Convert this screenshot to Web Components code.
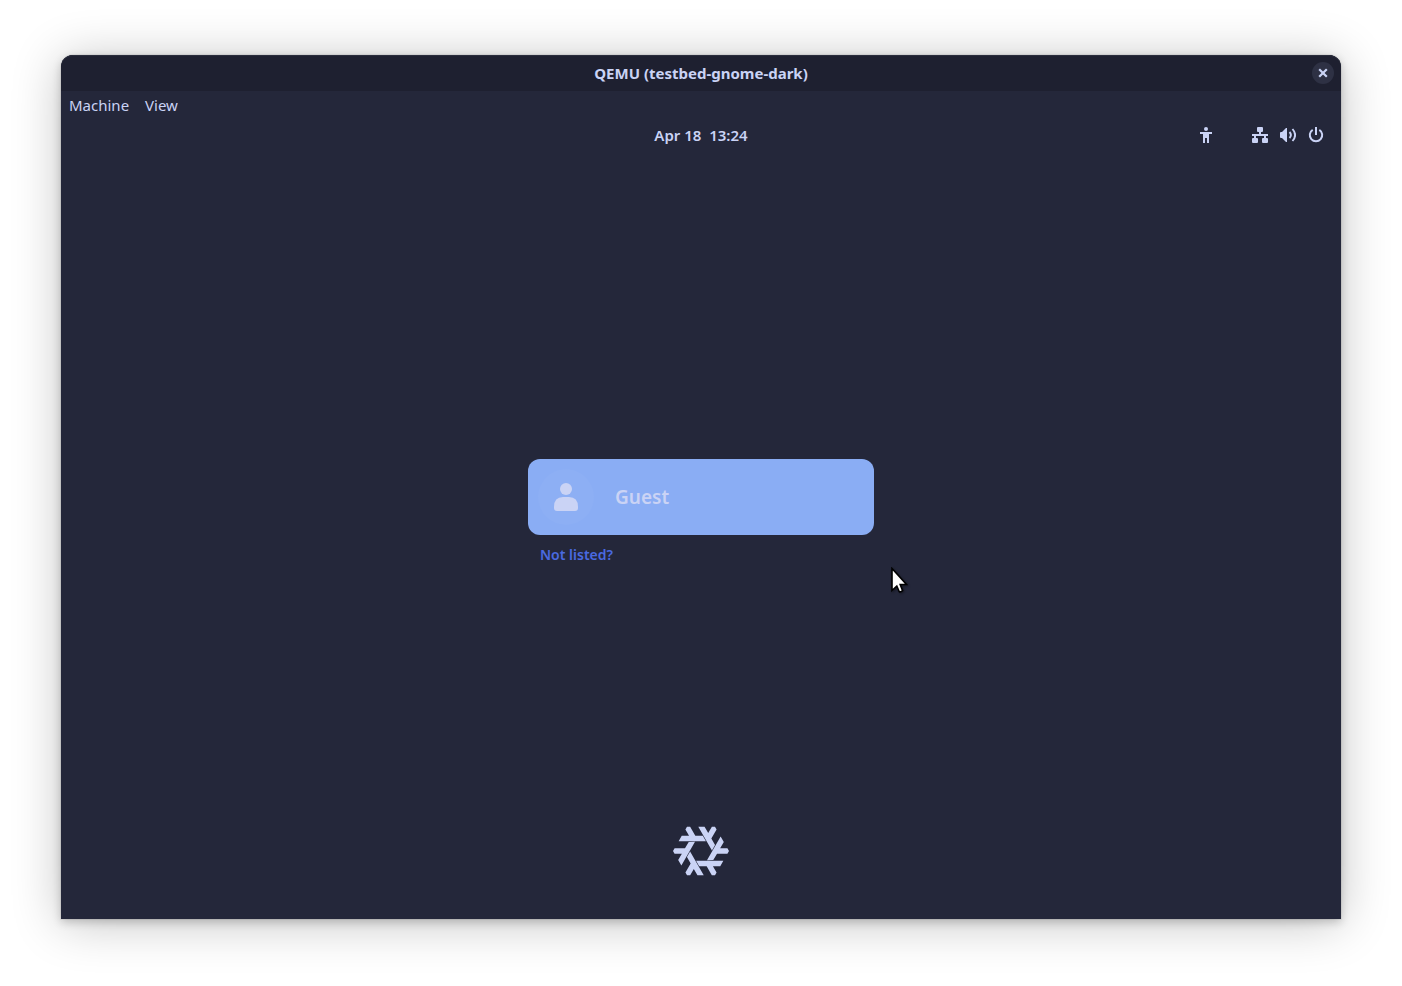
<!DOCTYPE html>
<html lang="en">
<head>
<meta charset="utf-8">
<title>QEMU (testbed-gnome-dark)</title>
<style>
html { background: #fff; }
body { margin: 0; font-family: "Noto Sans", "Open Sans", sans-serif; color: #cad3f5; }
</style>
</head>
<body>
<vm-desktop>
  <vm-window>
    <vm-titlebar slot="title">QEMU (testbed-gnome-dark)</vm-titlebar>
    <vm-menubar slot="menu"></vm-menubar>
    <gdm-screen></gdm-screen>
  </vm-window>
</vm-desktop>
<script>
const define = (name, html) => customElements.define(name, class extends HTMLElement {
  constructor() {
    super();
    this.attachShadow({ mode: "open" }).innerHTML = html;
  }
});
const buttonReset = "button{font:inherit;color:inherit;border:0;padding:0;margin:0;background:none}svg{display:block}";

define("vm-desktop", `<style>
:host{display:flex;box-sizing:border-box;min-height:100vh;padding:55px 61px 67px}
::slotted(*){flex:1}
</style><slot></slot>`);

define("vm-window", `<style>
:host{display:flex;flex-direction:column;min-width:0;background:#24273a;border-radius:12px 12px 0 0;
box-shadow:0 0 0 1px rgba(0,0,0,.05),0 3px 10px rgba(0,0,0,.2),0 4px 50px rgba(0,0,0,.24)}
</style><slot name="title"></slot><slot name="menu"></slot><slot></slot>`);

define("vm-titlebar", `<style>${buttonReset}
:host{display:grid;grid-template-columns:1fr auto 1fr;align-items:center;height:36px;background:#1e2030;
border-radius:12px 12px 0 0;box-shadow:inset 0 1px #2a2d3c;padding:0 7px}
h1{grid-column:2;margin:0;font-size:15px;line-height:24px;font-weight:700}
button{justify-self:end;display:grid;place-items:center;width:22px;height:22px;border-radius:50%;background:#2e3144}
</style><h1><slot></slot></h1>
<button type="button" aria-label="Close"><svg width="10" height="10" viewBox="0 0 10 10" fill="none" stroke="#cad3f5" stroke-width="2.2"><path d="M1.2 1.2l7.6 7.6M8.8 1.2L1.2 8.8"/></svg></button>`);

define("vm-menubar", `<style>${buttonReset}
:host{display:block}
nav{display:flex;gap:16px;padding:2px 8px}
button{font-size:15px;line-height:24px}
</style><nav aria-label="Main menu"><button type="button">Machine</button><button type="button">View</button></nav>`);

define("gdm-topbar", `<style>${buttonReset}
:host{display:grid;grid-template-columns:1fr auto 1fr;align-items:center;height:32px;padding:0 17px}
time{grid-column:2;font-size:15px;line-height:24px;font-weight:600;white-space:pre}
.status{justify-self:end;display:flex;align-items:center;gap:38px}
.system{display:flex;gap:12px}
svg{fill:#cad3f5}
</style><time>Apr 18  13:24</time>
<div class="status">
<button type="button" aria-label="Accessibility"><svg width="16" height="16" viewBox="0 0 16 16"><circle cx="8" cy="2" r="2"/><path d="M2 5h12v2h-3v9H9v-5H7v5H5V7H2z"/></svg></button>
<button type="button" class="system" aria-label="System">
<svg width="16" height="16" viewBox="0 0 16 16"><path d="M6 0h4q1 0 1 1v3q0 1-1 1H9v2h7v2h-2v2h1q1 0 1 1v3q0 1-1 1h-4q-1 0-1-1v-3q0-1 1-1h1V9H4v2h1q1 0 1 1v3q0 1-1 1H1q-1 0-1-1v-3q0-1 1-1h1V9H0V7h7V5H6Q5 5 5 4V1q0-1 1-1z"/></svg>
<svg width="16" height="16" viewBox="0 0 16 16"><path d="M6 1h1v14H6L2 11H1q-1 0-1-1V6q0-1 1-1h1z"/><path d="M9.500 5q2.800 3 0 6M12.500 2q5.200 6 0 12" fill="none" stroke="#cad3f5" stroke-width="1.9"/></svg>
<svg width="16" height="16" viewBox="0 0 16 16"><path d="M4.700 2.800A6.200 6.200 0 1 0 11.300 2.800" fill="none" stroke="#cad3f5" stroke-width="2"/><path d="M7 0h2v8H7z"/></svg>
</button></div>`);

define("gdm-user", `<style>${buttonReset}
:host{display:block}
button{display:flex;align-items:center;gap:21px;width:100%;padding:10px;border-radius:12px;background:#8aadf4;font-size:19px;line-height:28px;font-weight:600;text-align:left}
.avatar{display:grid;place-items:center;width:56px;height:56px;border-radius:50%;background:#8daff4}
svg{fill:#cad3f5}
</style><button type="button"><span class="avatar"><svg width="24" height="28" viewBox="0 0 24 28"><circle cx="12" cy="6" r="6"/><path d="M9 14h6q9 0 9 10v1q0 3-3 3H3q-3 0-3-3v-1Q0 14 9 14z"/></svg></span><slot></slot></button>`);

define("nix-logo", `<style>:host{display:block}svg{display:block;fill:#cad3f5}</style>
<svg width="56" height="56" viewBox="0 0 24 24" role="img" aria-label="NixOS"><path d="M7.352 1.592l-1.364.002L5.32 2.75l1.557 2.713-3.137-.008-1.32 2.34H14.11l-1.353-2.332-3.192-.006-2.214-3.865zm6.175 0l-2.687.025 5.846 10.127 1.341-2.34-1.59-2.765 2.24-3.85-.683-1.182h-1.336l-1.57 2.705-1.56-2.72zm6.887 4.195l-5.846 10.125 2.696-.008 1.601-2.76 4.453.016.682-1.183-.666-1.157-3.13-.008L21.778 8.1l-1.365-2.313zM9.432 8.086l-2.696.008-1.601 2.76-4.453-.016L0 12.02l.666 1.157 3.13.008-1.575 2.71 1.365 2.315L9.432 8.086zM7.33 12.25l-.006.01-.002-.004-1.342 2.34 1.59 2.765-2.24 3.85.684 1.182H7.35l.004-.006h.001l1.567-2.698 1.558 2.72 2.688-.026-.004-.006h.01L7.33 12.25zm2.55 3.93l1.354 2.332 3.192.006 2.215 3.865 1.363-.002.668-1.156-1.557-2.713 3.137.008 1.32-2.34H9.881Z"/></svg>`);

define("mouse-pointer", `<style>:host{display:block;pointer-events:none}svg{display:block;filter:drop-shadow(1px 1px 1px rgba(0,0,0,.4))}</style>
<svg width="18" height="26" viewBox="0 0 18 26" aria-hidden="true"><path d="M1 1.500V23.500L5.800 19L8.200 24.500Q9.500 25.500 11.600 23.600L9.200 17.500H15.500Z" fill="#fff" stroke="#000" stroke-width="1.600" stroke-linejoin="miter"/></svg>`);

define("gdm-screen", `<style>
:host{display:flex;flex-direction:column;flex:1}
main{flex:1;display:grid;grid-template-rows:1fr auto 1fr;justify-items:center}
.login{grid-row:2;position:relative;width:346px;padding-bottom:44px}
a{display:inline-block;margin:8px 12px 0;font-size:14px;line-height:24px;font-weight:600;color:#4a6ae0;text-decoration:none}
mouse-pointer{position:absolute;left:363px;top:108px}
nix-logo{grid-row:3;align-self:end;padding-bottom:40px}
</style><gdm-topbar></gdm-topbar>
<main><div class="login"><gdm-user>Guest</gdm-user><a href="#">Not listed?</a><mouse-pointer></mouse-pointer></div>
<nix-logo></nix-logo></main>`);
</script>
</body>
</html>
